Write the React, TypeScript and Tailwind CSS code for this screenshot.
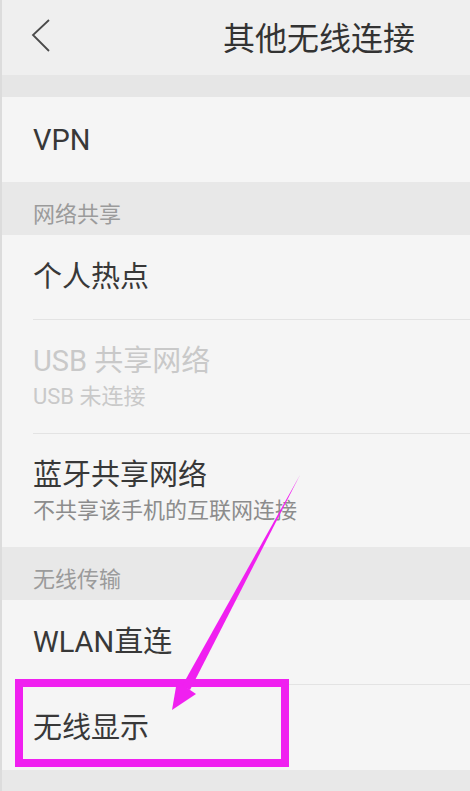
import React from 'react';

const font = { fontFamily: 'Roboto, "Noto Sans CJK SC", sans-serif' };

type RowProps = {
    title: string;
    sub?: string;
    disabled?: boolean;
    divider?: boolean;
    height: string;
};

const Row: React.FC<RowProps> = ({ title, sub, disabled, divider, height }) => (
    <div className="bg-[#f5f5f5] pl-[31px]">
        <div className={`${height} flex flex-col justify-center ${divider ? 'border-b border-[#e3e3e3]' : ''}`}>
            <div className={`text-[29px] leading-[36px] ${disabled ? 'text-[#c9c9c9]' : 'text-[#383838]'}`}>{title}</div>
            {sub && (
                <div className={`text-[22px] leading-[28px] mt-[4px] ${disabled ? 'text-[#c9c9c9]' : 'text-[#8c8c8c]'}`}>{sub}</div>
            )}
        </div>
    </div>
);

const Section: React.FC<{ label: string }> = ({ label }) => (
    <div className="h-[53px] bg-[#e8e8e8] pl-[31px] pt-[21px]">
        <div className="text-[22px] leading-[24px] text-[#9b9b9b]">{label}</div>
    </div>
);

export default function App() {
    return (
        <div className="relative w-[470px] h-[791px] overflow-hidden bg-[#e8e8e8] border-l-[2px] border-[#dcdcdc]" style={font}>
            {/* header */}
            <div className="h-[75px] bg-[#efefef] flex items-center justify-between pl-[28px] pr-[55px]">
                <svg width="24" height="36" viewBox="0 0 24 36" className="mt-[-3px]">
                    <path d="M19 2 L3 17 L19 33" fill="none" stroke="#4a4a4a" strokeWidth="1.8" />
                </svg>
                <div className="text-[32px] leading-[40px] text-[#333333] mt-[2px]">其他无线连接</div>
            </div>
            <div className="h-[22px] bg-[#e6e6e6]" />

            <Row title="VPN" height="h-[85px]" />
            <Section label="网络共享" />
            <Row title="个人热点" height="h-[85px]" divider />
            <Row title="USB 共享网络" sub="USB 未连接" disabled height="h-[114px]" divider />
            <Row title="蓝牙共享网络" sub="不共享该手机的互联网连接" height="h-[113px]" />
            <Section label="无线传输" />
            <Row title="WLAN直连" height="h-[85px]" divider />
            <Row title="无线显示" height="h-[85px]" />

            {/* annotation */}
            <svg className="absolute left-[-2px] top-0 pointer-events-none" width="470" height="791" viewBox="0 0 470 791">
                <rect x="19" y="683" width="266" height="80" fill="none" stroke="#f020f0" strokeWidth="8" />
                <polygon points="300,475 190,690 182,686" fill="#f020f0" />
                <polygon points="172,710 196,694 177,681" fill="#f020f0" />
            </svg>
        </div>
    );
}
